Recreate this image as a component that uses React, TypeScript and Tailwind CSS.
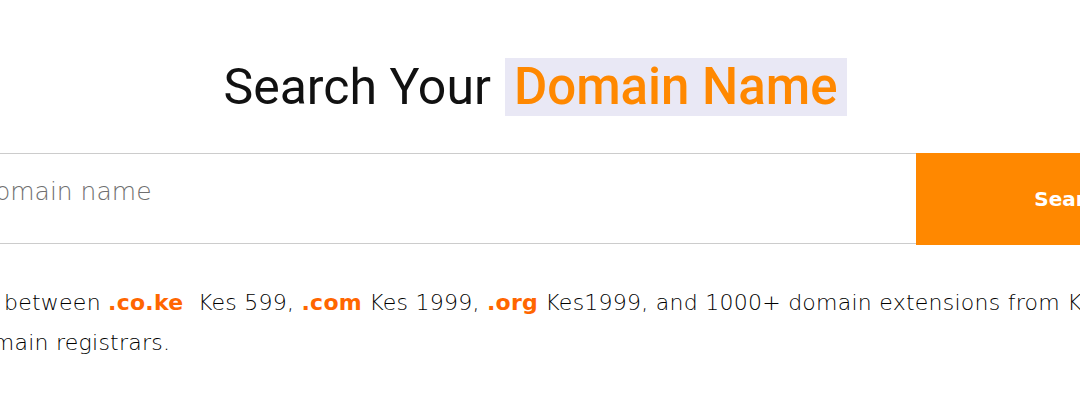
import React from "react";

const body = "font-['DejaVu_Sans','Open_Sans',sans-serif]";

export default function App() {
  return (
    <div className="h-[408px] w-[1080px] overflow-hidden bg-white">
      {/* heading */}
      <div className="flex justify-center pr-[10px] pt-[58px]">
        <h2 className="flex items-center font-['Roboto',sans-serif] text-[50px] font-normal leading-[58px] text-[#111]">
          <span className="pr-[14px]">Search Your</span>
          <span className="bg-[#e9e8f5] px-[9px] text-[51px] font-medium text-[#ff8800]">Domain Name</span>
        </h2>
      </div>

      {/* search bar */}
      <div className="ml-[-140px] mt-[37px] flex h-[92px] w-[1370px]">
        <input
          type="text"
          placeholder="Enter domain name"
          className={`${body} h-[91px] flex-1 border-y border-[#cccccc] bg-white pb-[14px] pl-[44px] text-[25px] font-extralight text-[#222] outline-none placeholder:text-[#6f6f6f]`}
        />
        <button className={`${body} h-[92px] w-[314px] bg-[#ff8800] text-[20px] font-bold text-white`}>
          Search
        </button>
      </div>

      {/* extensions note */}
      <p className={`${body} ml-[-86px] mt-[38px] w-[1320px] text-[22px] font-extralight leading-[40px] tracking-[0.25px] text-black`}>
        Choose between <b className="font-bold text-[#ff6600]">.co.ke</b>&nbsp; Kes 599,{" "}
        <b className="font-bold text-[#ff6600]">.com</b> Kes 1999,{" "}
        <b className="font-bold text-[#ff6600]">.org</b> Kes1999, and 1000+ domain extensions from Kenya&apos;s
        <br />
        <span className="ml-[-5px]">best domain registrars.</span>
      </p>
    </div>
  );
}
